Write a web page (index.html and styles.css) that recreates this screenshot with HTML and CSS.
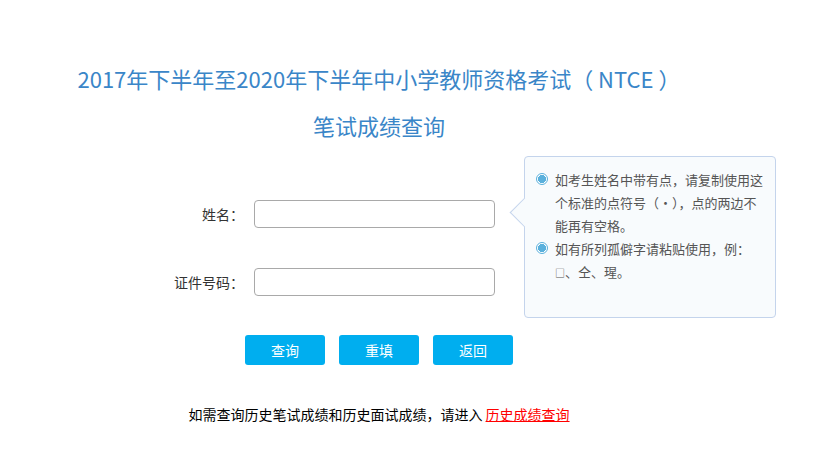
FILE: index.html
```html
<!DOCTYPE html>
<html lang="zh-CN">
<head>
<meta charset="utf-8">
<title>笔试成绩查询</title>
<link rel="stylesheet" href="styles.css">
</head>
<body>
<div class="page">
  <h1 class="title">2017年下半年至2020年下半年中小学教师资格考试（ NTCE ）</h1>
  <h2 class="subtitle">笔试成绩查询</h2>
  <div class="form-area">
    <div class="fields">
      <div class="row">
        <label class="label">姓名：</label>
        <input class="input" type="text">
      </div>
      <div class="row">
        <label class="label">证件号码：</label>
        <input class="input" type="text">
      </div>
    </div>
    <div class="tip">
      <div class="tip-item">
        <span class="dot"></span>
        <p class="tip-text">如考生姓名中带有点，请复制使用这<br>个标准的点符号（·），点的两边不<br>能再有空格。</p>
      </div>
      <div class="tip-item">
        <span class="dot"></span>
        <p class="tip-text">如有所列孤僻字请粘贴使用，例：<br><span class="tofu">□</span>、仝、瑆。</p>
      </div>
    </div>
  </div>
  <div class="buttons">
    <button class="btn">查询</button>
    <button class="btn">重填</button>
    <button class="btn">返回</button>
  </div>
  <p class="note">如需查询历史笔试成绩和历史面试成绩，请进入 <a class="link" href="#">历史成绩查询</a></p>
</div>
</body>
</html>
```
FILE: styles.css
```css
html, body {
  margin: 0;
  padding: 0;
  background: #fff;
}
body {
  font-family: "Noto Sans CJK SC", "Noto Sans", sans-serif;
}
.page {
  width: 758px;
}
.title, .subtitle {
  margin: 0;
  font-size: 22px;
  line-height: 30px;
  font-weight: normal;
  color: #3a86c8;
  text-align: center;
}
.title {
  margin-top: 63px;
  margin-left: -20px;
  margin-right: -20px;
}
.subtitle {
  margin-top: 17px;
}
.form-area {
  display: flex;
  align-items: flex-start;
  margin-top: 16px;
  margin-left: 150px;
}
.fields {
  flex: none;
  display: flex;
  flex-direction: column;
  gap: 40px;
  padding-top: 44px;
}
.row {
  display: flex;
  align-items: center;
  gap: 10px;
}
.label {
  width: 94px;
  text-align: right;
  font-size: 14px;
  color: #333;
  line-height: 20px;
}
.input {
  width: 241px;
  height: 28px;
  box-sizing: border-box;
  border: 1px solid #a9a9a9;
  border-radius: 4px;
  margin: 0;
  padding: 0 6px;
  background: #fff;
}
.tip {
  flex: none;
  position: relative;
  margin-left: 29px;
  width: 252px;
  height: 162px;
  box-sizing: border-box;
  border: 1px solid #c4d4ec;
  border-radius: 4px;
  background: #f8fbfd;
  padding: 11px 8px 0 11px;
}
.tip::before {
  content: "";
  position: absolute;
  left: -11px;
  top: 45px;
  width: 20px;
  height: 20px;
  background: #f8fbfd;
  border-left: 1px solid #c4d4ec;
  border-bottom: 1px solid #c4d4ec;
  transform: rotate(45deg);
}
.tip-item {
  position: relative;
  display: flex;
  gap: 7px;
  align-items: flex-start;
}
.dot {
  flex: none;
  width: 12px;
  height: 12px;
  box-sizing: border-box;
  margin-top: 5px;
  border: 1px solid #5ab0dc;
  border-radius: 50%;
  background: radial-gradient(circle, #5ab0dc 0 3.8px, #fff 4.3px);
}
.tip-text {
  margin: 0;
  font-size: 13px;
  line-height: 23px;
  color: #555;
  white-space: nowrap;
}
.tofu {
  font-size: 10px;
}
.buttons {
  display: flex;
  justify-content: center;
  gap: 14px;
  margin-top: 17px;
}
.btn {
  width: 80px;
  height: 30px;
  border: none;
  border-radius: 3px;
  background: #00aeef;
  color: #fff;
  font-family: inherit;
  font-size: 14px;
  padding: 0;
  cursor: pointer;
}
.note {
  margin: 39px 0 0;
  text-align: center;
  font-size: 14px;
  line-height: 20px;
  color: #000;
}
.link {
  color: #f00;
  text-decoration: underline;
}
```
